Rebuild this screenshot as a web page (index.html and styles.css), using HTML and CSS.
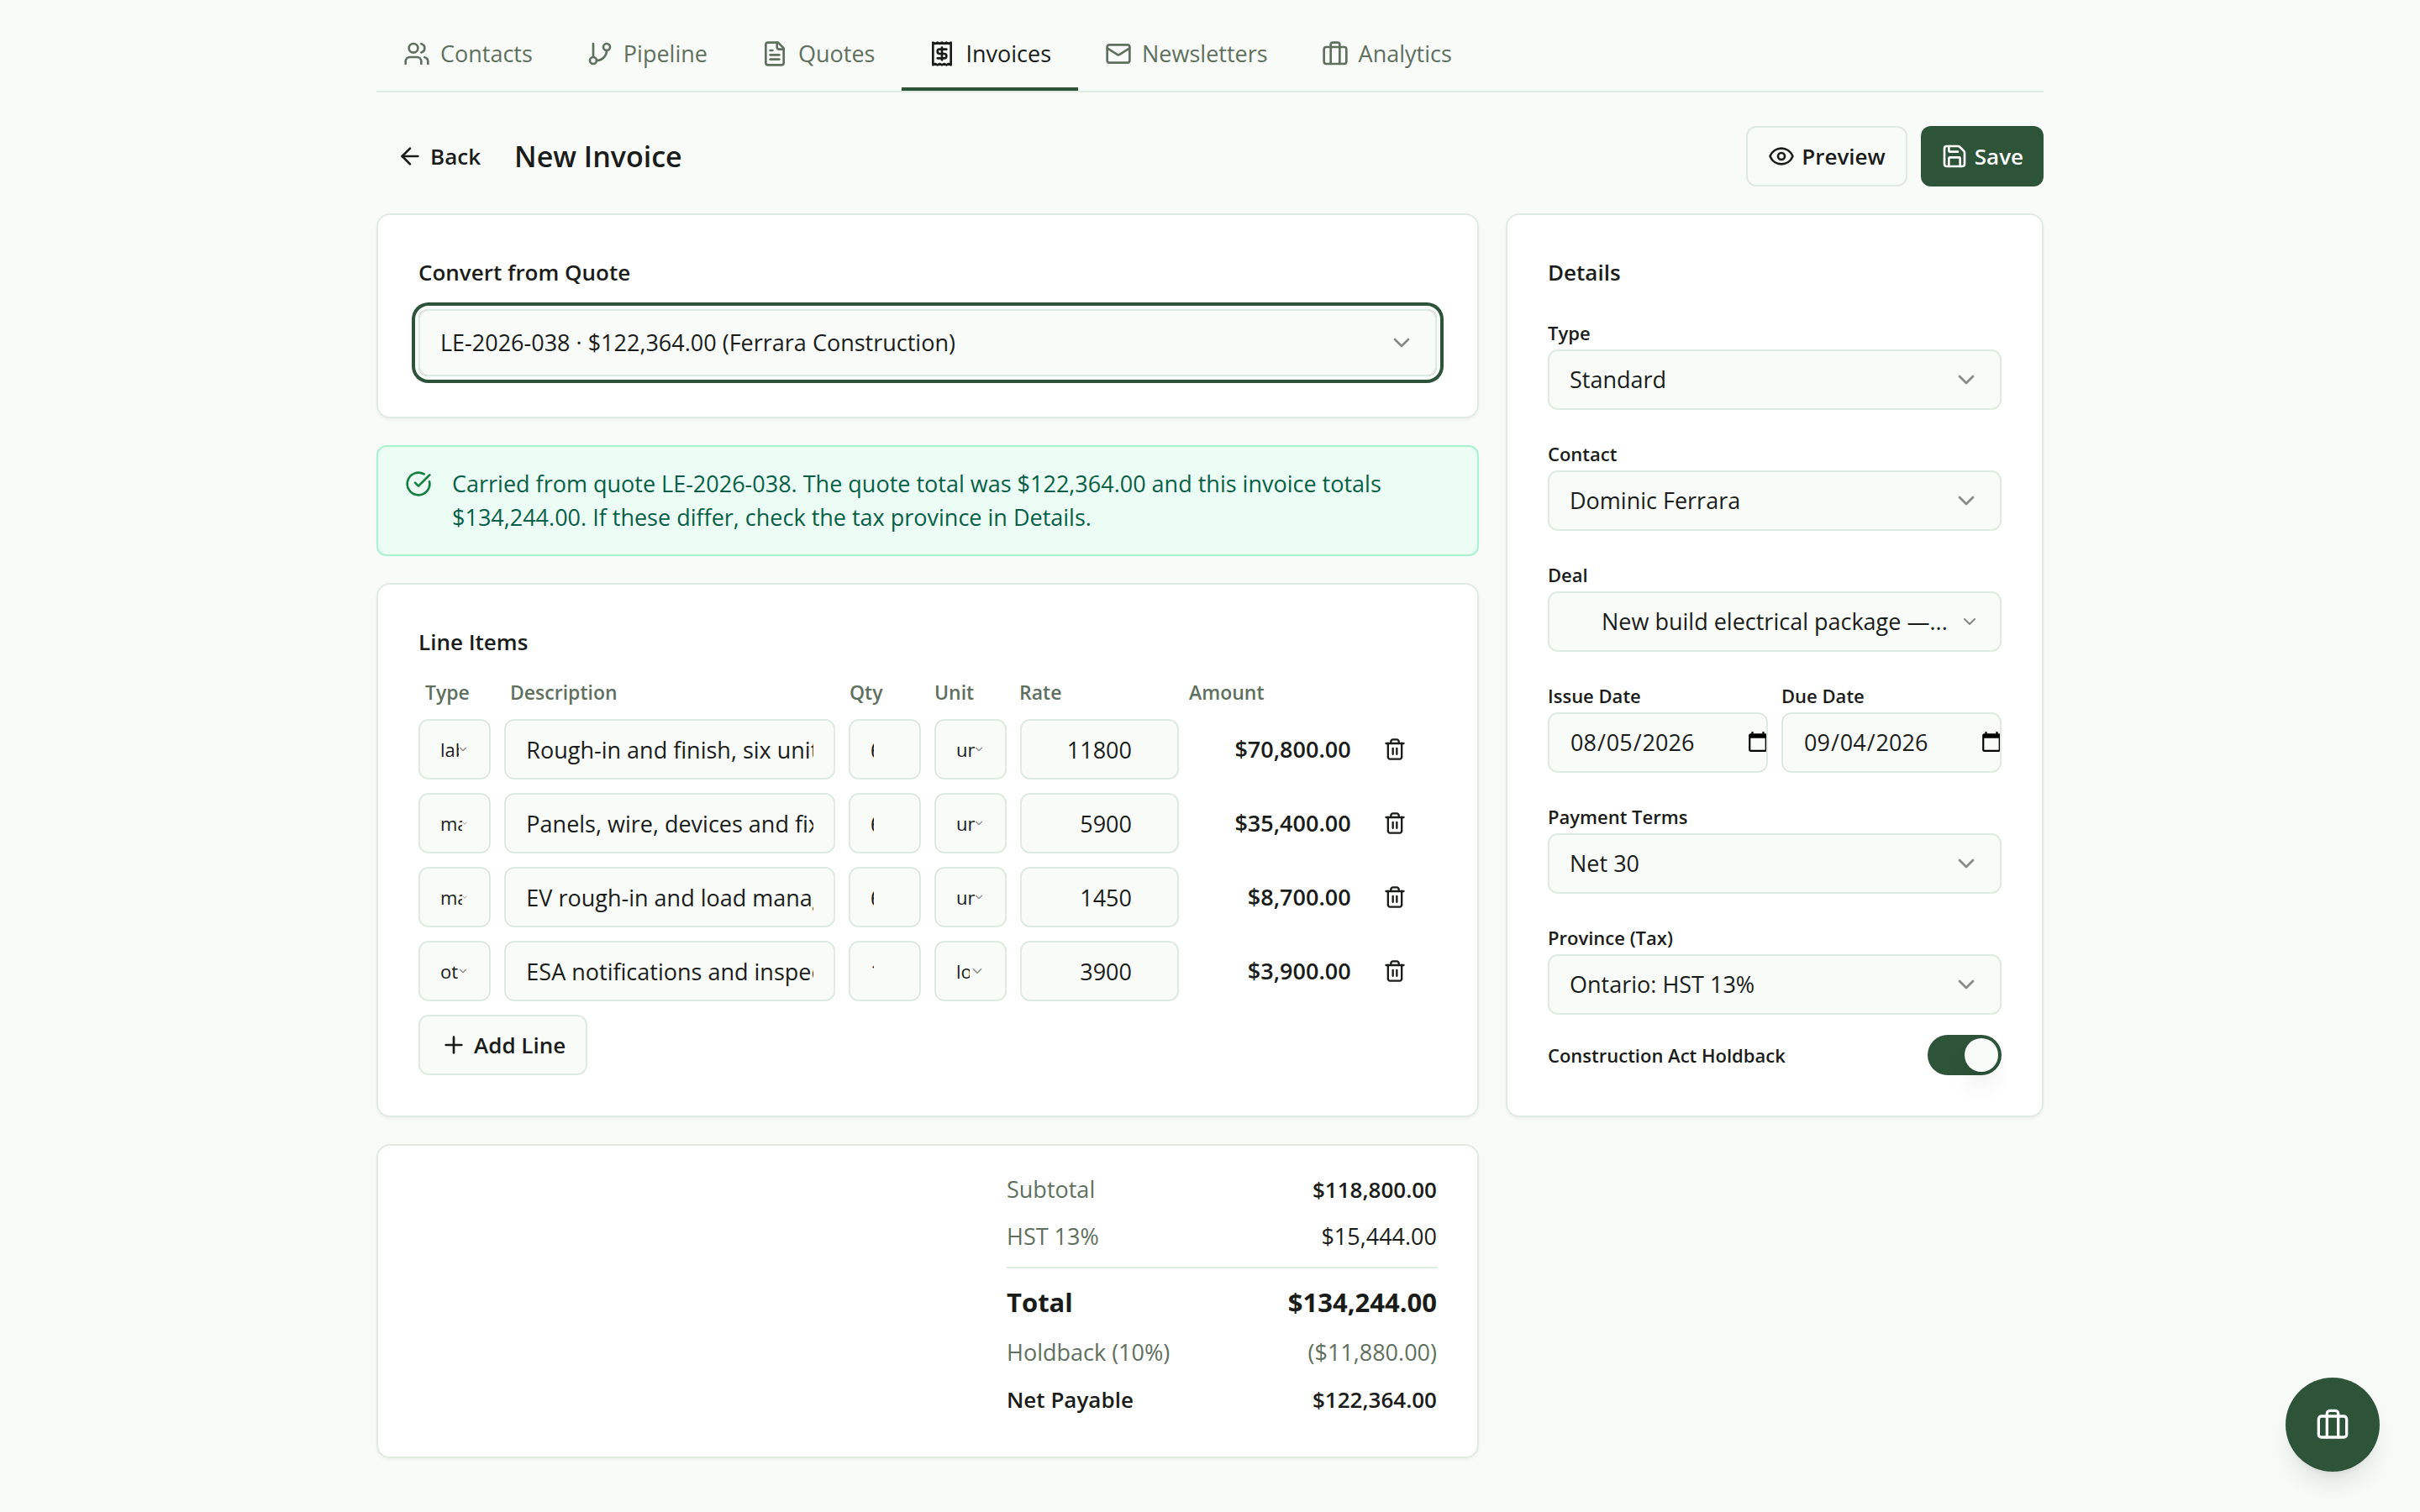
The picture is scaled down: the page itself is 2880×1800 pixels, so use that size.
FILE: index.html
```html
<!DOCTYPE html>
<html lang="en">
<head>
  <meta charset="UTF-8">
  <meta name="viewport" content="width=device-width, initial-scale=1">
  <title>New Invoice</title>
  <link rel="stylesheet" href="styles.css">
</head>
<body>

  <!-- shared icons -->
  <svg class="sprite" aria-hidden="true">
    <symbol id="i-chevron" viewBox="0 0 24 24"><path d="m6 9 6 6 6-6"/></symbol>
    <symbol id="i-trash" viewBox="0 0 24 24"><path d="M3 6h18"/><path d="M19 6v14c0 1-1 2-2 2H7c-1 0-2-1-2-2V6"/><path d="M8 6V4c0-1 1-2 2-2h4c1 0 2 1 2 2v2"/><path d="M10 11v6"/><path d="M14 11v6"/></symbol>
    <symbol id="i-briefcase" viewBox="0 0 24 24"><rect x="2" y="6" width="20" height="15" rx="2"/><path d="M16 21V4a2 2 0 0 0-2-2h-4a2 2 0 0 0-2 2v17"/></symbol>
  </svg>

  <div class="container">
    <nav class="tabs">
      <a class="tab" href="#contacts"><svg class="icon" viewBox="0 0 24 24"><path d="M16 21v-2a4 4 0 0 0-4-4H6a4 4 0 0 0-4 4v2"/><circle cx="9" cy="7" r="4"/><path d="M22 21v-2a4 4 0 0 0-3-3.87"/><path d="M16 3.13a4 4 0 0 1 0 7.75"/></svg>Contacts</a>
      <a class="tab" href="#pipeline"><svg class="icon" viewBox="0 0 24 24"><path d="M6 3v12"/><circle cx="18" cy="6" r="3"/><circle cx="6" cy="18" r="3"/><path d="M18 9a9 9 0 0 1-9 9"/></svg>Pipeline</a>
      <a class="tab" href="#quotes"><svg class="icon" viewBox="0 0 24 24"><path d="M15 2H6a2 2 0 0 0-2 2v16a2 2 0 0 0 2 2h12a2 2 0 0 0 2-2V7Z"/><path d="M14 2v4a2 2 0 0 0 2 2h4"/><path d="M10 9H8"/><path d="M16 13H8"/><path d="M16 17H8"/></svg>Quotes</a>
      <a class="tab active" href="#invoices" aria-current="page"><svg class="icon" viewBox="0 0 24 24"><path d="M4 2v20l2-1 2 1 2-1 2 1 2-1 2 1 2-1 2 1V2l-2 1-2-1-2 1-2-1-2 1-2-1-2 1Z"/><path d="M16 8h-6a2 2 0 1 0 0 4h4a2 2 0 1 1 0 4H8"/><path d="M12 17.5v-11"/></svg>Invoices</a>
      <a class="tab" href="#newsletters"><svg class="icon" viewBox="0 0 24 24"><rect x="2" y="4" width="20" height="16" rx="2"/><path d="m22 7-8.97 5.7a1.94 1.94 0 0 1-2.06 0L2 7"/></svg>Newsletters</a>
      <a class="tab" href="#analytics"><svg class="icon"><use href="#i-briefcase"/></svg>Analytics</a>
    </nav>

    <form id="invoiceForm">
      <header class="page-header">
        <button class="btn btn-ghost" type="button"><svg class="icon" viewBox="0 0 24 24"><path d="m12 19-7-7 7-7"/><path d="M19 12H5"/></svg>Back</button>
        <h1>New Invoice</h1>
        <div class="actions">
          <button class="btn btn-outline" type="button"><svg class="icon" viewBox="0 0 24 24"><path d="M2.062 12.348a1 1 0 0 1 0-.696 10.75 10.75 0 0 1 19.876 0 1 1 0 0 1 0 .696 10.75 10.75 0 0 1-19.876 0"/><circle cx="12" cy="12" r="3"/></svg>Preview</button>
          <button class="btn btn-primary" type="submit"><svg class="icon" viewBox="0 0 24 24"><path d="M15.2 3a2 2 0 0 1 1.4.6l3.8 3.8a2 2 0 0 1 .6 1.4V19a2 2 0 0 1-2 2H5a2 2 0 0 1-2-2V5a2 2 0 0 1 2-2z"/><path d="M17 21v-7a1 1 0 0 0-1-1H8a1 1 0 0 0-1 1v7"/><path d="M7 3v4a1 1 0 0 0 1 1h7"/></svg>Save</button>
        </div>
      </header>

      <div class="layout">
        <div class="main">
          <!-- Convert from quote -->
          <section class="card">
            <label class="card-title" for="quote">Convert from Quote</label>
            <div class="select focused">
              <select class="control" id="quote" name="quote"><option>LE-2026-038 · $122,364.00 (Ferrara Construction)</option></select>
              <svg class="icon"><use href="#i-chevron"/></svg>
            </div>
          </section>

          <div class="alert" role="status">
            <svg class="icon" viewBox="0 0 24 24"><path d="M21.801 10A10 10 0 1 1 17 3.335"/><path d="m9 11 3 3L22 4"/></svg>
            <p>Carried from quote LE-2026-038. The quote total was $122,364.00 and this invoice totals $134,244.00. If these differ, check the tax province in Details.</p>
          </div>

          <!-- Line items -->
          <section class="card">
            <h2 class="card-title">Line Items</h2>
            <table class="items">
              <thead>
                <tr>
                  <th>Type</th>
                  <th class="span-4">Description</th>
                  <th>Qty</th>
                  <th>Unit</th>
                  <th class="span-2">Rate</th>
                  <th class="span-2">Amount</th>
                </tr>
              </thead>
              <tbody>
                <tr>
                  <td><div class="select tiny"><select class="control" name="type" aria-label="Type"><option>labour</option></select><svg class="icon"><use href="#i-chevron"/></svg></div></td>
                  <td class="span-4"><input class="control" type="text" name="description" aria-label="Description" value="Rough-in and finish, six units"></td>
                  <td><input class="control number" type="number" name="qty" aria-label="Qty" value="6"></td>
                  <td><div class="select tiny"><select class="control" name="unit" aria-label="Unit"><option>unit</option></select><svg class="icon"><use href="#i-chevron"/></svg></div></td>
                  <td class="span-2"><input class="control number" type="number" name="rate" aria-label="Rate" value="11800"></td>
                  <td class="span-2 amount">$70,800.00</td>
                  <td><button class="btn-icon" type="button" aria-label="Remove line"><svg class="icon"><use href="#i-trash"/></svg></button></td>
                </tr>
                <tr>
                  <td><div class="select tiny long"><select class="control" name="type" aria-label="Type"><option>material</option></select><svg class="icon"><use href="#i-chevron"/></svg></div></td>
                  <td class="span-4"><input class="control" type="text" name="description" aria-label="Description" value="Panels, wire, devices and fixtures"></td>
                  <td><input class="control number" type="number" name="qty" aria-label="Qty" value="6"></td>
                  <td><div class="select tiny"><select class="control" name="unit" aria-label="Unit"><option>unit</option></select><svg class="icon"><use href="#i-chevron"/></svg></div></td>
                  <td class="span-2"><input class="control number" type="number" name="rate" aria-label="Rate" value="5900"></td>
                  <td class="span-2 amount">$35,400.00</td>
                  <td><button class="btn-icon" type="button" aria-label="Remove line"><svg class="icon"><use href="#i-trash"/></svg></button></td>
                </tr>
                <tr>
                  <td><div class="select tiny long"><select class="control" name="type" aria-label="Type"><option>material</option></select><svg class="icon"><use href="#i-chevron"/></svg></div></td>
                  <td class="span-4"><input class="control" type="text" name="description" aria-label="Description" value="EV rough-in and load management"></td>
                  <td><input class="control number" type="number" name="qty" aria-label="Qty" value="6"></td>
                  <td><div class="select tiny"><select class="control" name="unit" aria-label="Unit"><option>unit</option></select><svg class="icon"><use href="#i-chevron"/></svg></div></td>
                  <td class="span-2"><input class="control number" type="number" name="rate" aria-label="Rate" value="1450"></td>
                  <td class="span-2 amount">$8,700.00</td>
                  <td><button class="btn-icon" type="button" aria-label="Remove line"><svg class="icon"><use href="#i-trash"/></svg></button></td>
                </tr>
                <tr>
                  <td><div class="select tiny"><select class="control" name="type" aria-label="Type"><option>other</option></select><svg class="icon"><use href="#i-chevron"/></svg></div></td>
                  <td class="span-4"><input class="control" type="text" name="description" aria-label="Description" value="ESA notifications and inspections"></td>
                  <td><input class="control number" type="number" name="qty" aria-label="Qty" value="1"></td>
                  <td><div class="select tiny short"><select class="control" name="unit" aria-label="Unit"><option>lot</option></select><svg class="icon"><use href="#i-chevron"/></svg></div></td>
                  <td class="span-2"><input class="control number" type="number" name="rate" aria-label="Rate" value="3900"></td>
                  <td class="span-2 amount">$3,900.00</td>
                  <td><button class="btn-icon" type="button" aria-label="Remove line"><svg class="icon"><use href="#i-trash"/></svg></button></td>
                </tr>
              </tbody>
            </table>
            <button class="btn btn-outline" type="button"><svg class="icon" viewBox="0 0 24 24"><path d="M5 12h14"/><path d="M12 5v14"/></svg>Add Line</button>
          </section>
        </div>

        <!-- Details -->
        <aside class="card details">
          <h2 class="card-title">Details</h2>
          <div class="field">
            <label for="type">Type</label>
            <div class="select"><select class="control" id="type" name="invoice-type"><option>Standard</option></select><svg class="icon"><use href="#i-chevron"/></svg></div>
          </div>
          <div class="field">
            <label for="contact">Contact</label>
            <div class="select"><select class="control" id="contact" name="contact"><option>Dominic Ferrara</option></select><svg class="icon"><use href="#i-chevron"/></svg></div>
          </div>
          <div class="field">
            <label for="deal">Deal</label>
            <div class="select deal"><select class="control" id="deal" name="deal"><option>New build electrical package —...</option></select><svg class="icon"><use href="#i-chevron"/></svg></div>
          </div>
          <div class="dates">
            <div class="field">
              <label for="issue">Issue Date</label>
              <input class="control" id="issue" name="issue-date" type="date" value="2026-08-05">
            </div>
            <div class="field">
              <label for="due">Due Date</label>
              <input class="control" id="due" name="due-date" type="date" value="2026-09-04">
            </div>
          </div>
          <div class="field">
            <label for="terms">Payment Terms</label>
            <div class="select"><select class="control" id="terms" name="terms"><option>Net 30</option></select><svg class="icon"><use href="#i-chevron"/></svg></div>
          </div>
          <div class="field">
            <label for="province">Province (Tax)</label>
            <div class="select"><select class="control" id="province" name="province"><option>Ontario: HST 13%</option></select><svg class="icon"><use href="#i-chevron"/></svg></div>
          </div>
          <div class="switch-row">
            <label for="holdback">Construction Act Holdback</label>
            <input class="switch" id="holdback" name="holdback" type="checkbox" role="switch" checked>
          </div>
        </aside>

        <!-- Totals -->
        <section class="card totals">
          <dl>
            <div class="row"><dt>Subtotal</dt><dd class="medium">$118,800.00</dd></div>
            <div class="row"><dt>HST 13%</dt><dd>$15,444.00</dd></div>
            <div class="row total"><dt>Total</dt><dd>$134,244.00</dd></div>
            <div class="row muted"><dt>Holdback (10%)</dt><dd>($11,880.00)</dd></div>
            <div class="row net"><dt>Net Payable</dt><dd>$122,364.00</dd></div>
          </dl>
        </section>
      </div>
    </form>
  </div>

  <button class="fab" type="button" aria-label="Open workspace"><svg class="icon"><use href="#i-briefcase"/></svg></button>

</body>
</html>
```
FILE: styles.css
```css
:root {
  --bg: #f9fbf9;
  --text: #1a1c19;
  --muted: #5f705f;
  --border: #dfebe0;
  --green: #2d5339;
}

* { box-sizing: border-box; }
body { margin: 0; background: var(--bg); color: var(--text); font: 27px/40px "Open Sans", "Noto Sans", sans-serif; }
h1, h2, p, dl, dd { margin: 0; }
button, input, select { font: inherit; color: inherit; }

.sprite { display: none; }
.icon { width: 32px; height: 32px; flex: none; fill: none; stroke: currentColor; stroke-width: 2; stroke-linecap: round; stroke-linejoin: round; }

.container { max-width: 2048px; margin: 0 auto; padding: 24px 32px 64px; }

/* Tabs */
.tabs { display: flex; border-bottom: 2px solid var(--border); margin-bottom: 40px; }
.tab { display: flex; align-items: center; gap: 12px; padding: 20px 32px; border-bottom: 4px solid transparent; color: var(--muted); font-weight: 500; text-decoration: none; }
.tab.active { color: var(--text); border-color: var(--green); }

/* Buttons */
.btn { display: inline-flex; align-items: center; gap: 8px; height: 72px; padding: 0 24px; border: 0; border-radius: 12px; background: none; font-size: 26px; font-weight: 600; cursor: pointer; }
.btn-outline { border: 2px solid var(--border); background: var(--bg); }
.btn-primary { background: var(--green); color: #fff; }
.btn-icon { display: flex; align-items: center; justify-content: center; width: 72px; height: 72px; padding: 0; border: 0; background: none; cursor: pointer; }
.btn-icon .icon { width: 28px; height: 28px; }

.page-header { display: flex; align-items: center; gap: 16px; margin-bottom: 32px; }
.page-header h1 { font-size: 34px; line-height: 56px; font-weight: 600; }
.actions { display: flex; gap: 16px; margin-left: auto; }

/* Layout */
.layout { display: grid; grid-template-columns: minmax(0, 1fr) 640px; gap: 32px; }
.main { display: flex; flex-direction: column; gap: 32px; }
.card { padding: 48px; border: 2px solid var(--border); border-radius: 16px; background: #fff; box-shadow: 0 2px 4px rgba(0, 0, 0, 0.05); }
.card-title { display: block; margin-bottom: 24px; font-size: 26px; line-height: 40px; font-weight: 600; }

.alert { display: flex; gap: 24px; padding: 24px 32px; border: 2px solid #a7f3d0; border-radius: 12px; background: #ecfdf5; color: #065f46; }
.alert .icon { margin-top: 4px; color: #15803d; }

/* Form controls */
.control { width: 100%; height: 72px; padding: 0 24px; border: 2px solid var(--border); border-radius: 12px; background: var(--bg); outline: none; }
select.control { appearance: none; padding-right: 56px; text-overflow: ellipsis; }
.select { display: grid; align-items: center; }
.select > * { grid-area: 1 / 1; }
.select .icon { justify-self: end; margin-right: 26px; opacity: 0.5; pointer-events: none; }
.select.focused { border-radius: 12px; box-shadow: 0 0 0 4px var(--bg), 0 0 0 8px var(--green); }
.select.focused .control { height: 80px; }
.select.deal .control { padding-left: 62px; }
.select.deal .icon { width: 24px; height: 24px; }
.number { appearance: textfield; padding-right: 54px; text-align: right; }
.number::-webkit-inner-spin-button { appearance: none; margin: 0; }

/* Narrow selects in the item rows */
.tiny select.control { padding-right: 36px; font-size: 22px; text-overflow: clip; }
.tiny .icon { width: 14px; height: 14px; }
.tiny.long select.control { padding-right: 32px; }
.tiny.long .icon { width: 10px; height: 10px; }
.tiny.short select.control { padding-right: 42px; }
.tiny.short .icon { width: 18px; height: 18px; }

/* Line items */
.items, .items thead, .items tbody { display: block; }
.items tr { display: grid; grid-template-columns: repeat(12, minmax(0, 1fr)); gap: 16px; align-items: center; margin-bottom: 16px; }
.items thead tr { padding: 0 8px; }
.items th { padding: 0; color: var(--muted); font-size: 23px; line-height: 32px; font-weight: 600; text-align: left; }
.items td { padding: 0; }
.items .span-4 { grid-column: span 4; }
.items .span-2 { grid-column: span 2; }
.items .amount { font-weight: 600; text-align: right; }

/* Details */
.details { display: flex; flex-direction: column; gap: 40px; }
.details .card-title { margin: 0; }
.field { display: flex; flex-direction: column; gap: 8px; }
.details label { font-size: 22px; line-height: 24px; font-weight: 600; }
.dates { display: grid; grid-template-columns: repeat(2, minmax(0, 1fr)); gap: 16px; }
.dates .control { overflow: hidden; }
/* the picker icon sits in the right padding */
.dates .control::-webkit-calendar-picker-indicator { width: 28px; height: 28px; margin: 0 -28px 0 0; padding: 0; }
.switch-row { display: flex; align-items: center; justify-content: space-between; margin-top: -16px; }
.switch { appearance: none; width: 88px; height: 48px; margin: 0; padding: 4px; border-radius: 24px; background: var(--green); }
.switch::before { content: ""; display: block; width: 40px; height: 40px; border-radius: 50%; background: var(--bg); box-shadow: 0 20px 30px -6px rgba(0, 0, 0, 0.1), 0 8px 12px -8px rgba(0, 0, 0, 0.1); }
.switch:checked::before { margin-left: auto; }

/* Totals */
.totals { grid-column: 1; padding-top: 32px; }
.totals dl { display: flex; flex-direction: column; gap: 16px; width: 512px; margin-left: auto; }
.row { display: flex; justify-content: space-between; }
.row dt { color: var(--muted); }
.row .medium, .row.net { font-size: 26px; font-weight: 600; }
.row.muted { color: var(--muted); }
.row.total { padding-top: 16px; border-top: 2px solid var(--border); font-size: 31px; line-height: 48px; font-weight: 700; }
.row.total dt, .row.net dt { color: var(--text); }

.fab { position: fixed; right: 48px; bottom: 48px; display: flex; align-items: center; justify-content: center; width: 112px; height: 112px; border: 0; border-radius: 50%; background: var(--green); color: #fff; box-shadow: 0 20px 30px -6px rgba(0, 0, 0, 0.1), 0 8px 12px -8px rgba(0, 0, 0, 0.1); cursor: pointer; }
.fab .icon { width: 40px; height: 40px; }
```
